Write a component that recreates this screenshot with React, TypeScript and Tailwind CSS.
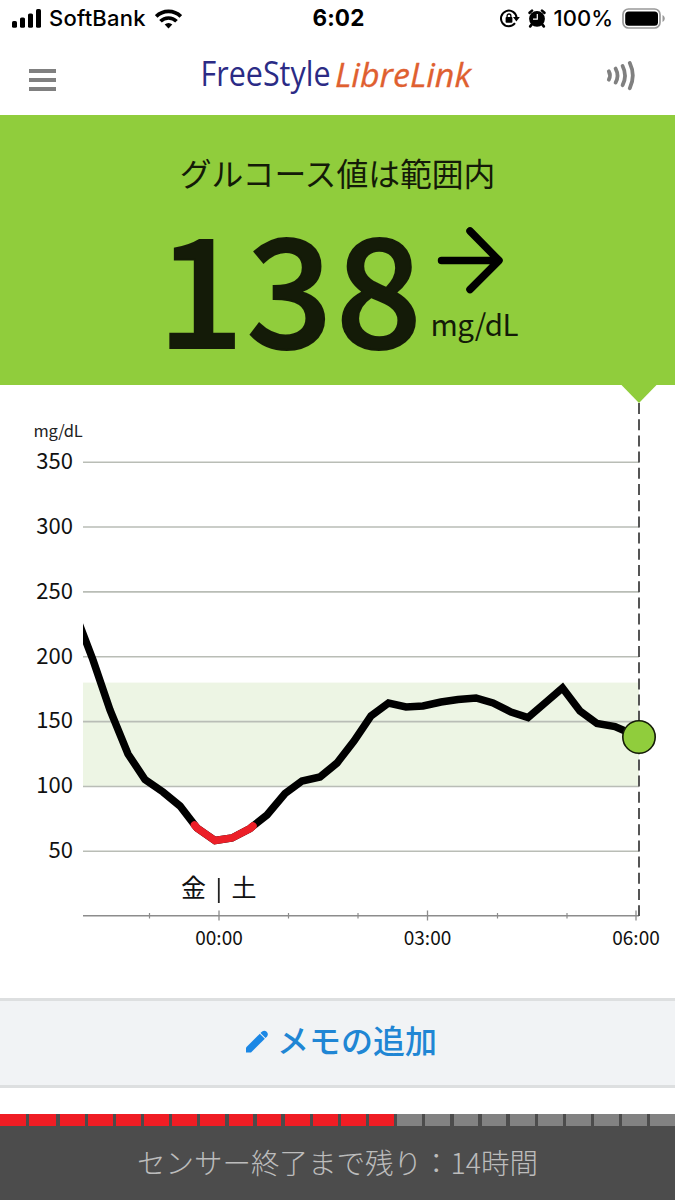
import React from 'react';

const GLUCOSE_LEVELS = [350, 300, 250, 200, 150, 100, 50];

const TRACE =
  '76,615.5 93,660 110,710 128,754 145,779.5 163,792 180,806 197,828 215,840.5 232,838 250,828.5 267,815 285,793.5 302,781 320,777 337,763 354,741 371,716 388.5,703 406,707 423,706 441,702 458,699.5 476,698 493,703 511,712 528,717.5 545,703 562.5,688 580,711 597,723.5 615,726.5 639,737';

const LOW_TRACE = '194.5,825 197,828 215,840.5 232,838 250,828.5 253,826';

const TIME_LABELS = [
  { x: 219, label: '00:00' },
  { x: 427.5, label: '03:00' },
  { x: 636, label: '06:00' },
];

const MINOR_TICKS = [149.5, 288.5, 358, 497.5, 567];

const SEGMENT_COUNT = 24;
const USED_SEGMENTS = 14;

function levelY(level: number) {
  return 462.2 + (350 - level) * 1.297;
}

function segmentWidth(index: number) {
  if (index === 0) return 'w-[26px]';
  if (index === 1) return 'w-[27px]';
  return 'flex-1';
}

function StatusBar() {
  return (
    <div className="grid h-[37px] grid-cols-3 items-center pl-3 pr-[10px] font-['Inter','Liberation_Sans',sans-serif] text-black">
      <div className="flex items-center">
        <svg width="30" height="19" viewBox="0 0 30 19">
          <rect x="0" y="12" width="5" height="6.8" rx="1.6" />
          <rect x="8" y="8.5" width="5" height="10.3" rx="1.6" />
          <rect x="16" y="4.5" width="5" height="14.3" rx="1.6" />
          <rect x="24" y="0" width="5" height="18.8" rx="1.6" />
        </svg>
        <span className="ml-[7px] pb-px text-[22px] font-medium leading-none tracking-[0.2px]">SoftBank</span>
        <svg className="ml-[9px]" width="27" height="20" viewBox="0 0 27 20" fill="none" stroke="black" strokeWidth="3.7">
          <path d="M1.2 7.4a17.4 17.4 0 0 1 24.6 0" />
          <path d="M5.5 12.3a11.3 11.3 0 0 1 16 0" />
          <path d="M13.5 19.4l-3.8-3.8a5.4 5.4 0 0 1 7.6 0z" fill="black" stroke="none" />
        </svg>
      </div>
      <div className="text-center text-[22.5px] font-bold leading-none tracking-[0.1px]">6:02</div>
      <div className="flex items-center justify-end">
        <svg width="20" height="19" viewBox="0 0 20 19">
          <path d="M15 14.2A7.8 7.8 0 1 1 16.6 9" fill="none" stroke="black" strokeWidth="2" />
          <path d="M13 8h6.8l-3.4 4.4z" />
          <rect x="5.6" y="8.1" width="6.8" height="5.6" rx="0.8" />
          <path d="M7.1 8.5V6.9a1.9 1.9 0 0 1 3.8 0v1.6" fill="none" stroke="black" strokeWidth="1.3" />
        </svg>
        <svg className="ml-2" width="18" height="19" viewBox="0 0 18 19">
          <circle cx="9" cy="9.8" r="7.9" />
          <path d="M1.6 3.8l2.4-2.2M16.4 3.8L14 1.6M3.6 15.6l-1.4 1.8M14.4 15.6l1.4 1.8" stroke="black" strokeWidth="2.6" strokeLinecap="round" />
          <path d="M9.3 5v5.2H5" fill="none" stroke="white" strokeWidth="1.2" />
        </svg>
        <span className="ml-[8px] pb-px text-[22px] font-medium leading-none">100%</span>
        <svg className="ml-[9px]" width="43" height="21" viewBox="0 0 43 21">
          <rect x="1" y="1" width="37" height="19" rx="5.5" fill="none" stroke="#999" strokeWidth="1.7" />
          <rect x="3.2" y="3.4" width="32.8" height="14.4" rx="3.5" />
          <path d="M40.5 7v7c3-1.4 3-5.6 0-7z" fill="#999" />
        </svg>
      </div>
    </div>
  );
}

function Header() {
  return (
    <header className="flex h-[78px] items-center pl-[29px] pr-[39px]">
      <button aria-label="Menu" className="flex flex-col gap-[5px] pt-[8px]">
        <span className="h-1 w-[27px] bg-[#808080]" />
        <span className="h-1 w-[27px] bg-[#808080]" />
        <span className="h-1 w-[27px] bg-[#808080]" />
      </button>
      <svg width="274" height="50" viewBox="200 50 274 50" className="ml-[144px] font-['Open_Sans','Noto_Sans',sans-serif]">
        <text x="200.5" y="84.5" fontSize="34" fill="#2b2b85" textLength="130" lengthAdjust="spacingAndGlyphs">
          FreeStyle
        </text>
        <text x="335" y="85.5" fontSize="33" fill="#df6030" stroke="#df6030" strokeWidth="0.3" fontStyle="italic" textLength="136" lengthAdjust="spacingAndGlyphs">
          LibreLink
        </text>
      </svg>
      <svg className="ml-auto" width="30" height="32" viewBox="606 59 30 32" fill="none" stroke="#808080" strokeWidth="3.8" strokeLinecap="round">
        <path d="M608.8 70.3q2.4 4.2 0 8.4" />
        <path d="M615.6 67.6q3.8 7 0 14" />
        <path d="M622.6 65q4.8 9.6 0 19.2" />
        <path d="M629.8 62q6 12.6 0 25.2" />
      </svg>
    </header>
  );
}

function GlucoseReading() {
  return (
    <section className="flex h-[270px] flex-col items-center bg-[#90cd3c] text-[#141b08]">
      <h1 className="mt-[34px] text-[31.8px] leading-[46px]">グルコース値は範囲内</h1>
      <div className="mt-[7px] flex w-[360px]">
        <span className="w-[265px] whitespace-nowrap text-[151px] font-medium leading-[160px] tracking-[3px] [-webkit-text-stroke:2px_#141b08]">138</span>
        <div className="ml-[8px] flex flex-col">
          <svg className="ml-[6px] mt-[24px]" width="66" height="68" viewBox="437 226 66 68" fill="none" stroke="black" strokeWidth="7.5" strokeLinecap="round" strokeLinejoin="round">
            <path d="M441.5 260.5H498M470 231l29 29.5-29 29" />
          </svg>
          <span className="mt-[7px] text-[29.5px] leading-[44px] tracking-[-0.6px]">mg/dL</span>
        </div>
      </div>
    </section>
  );
}

function GlucoseChart() {
  return (
    <svg className="block" width="675" height="613" viewBox="0 385 675 613">
      <defs>
        <clipPath id="plot">
          <rect x="83" y="403" width="592" height="513" />
        </clipPath>
      </defs>
      <rect x="83" y="682.6" width="556" height="104" fill="#edf5e4" />
      <text x="33.5" y="436.5" fontSize="16.5" letterSpacing="-0.35" fill="#222">mg/dL</text>
      {GLUCOSE_LEVELS.map((level) => (
        <g key={level}>
          <line x1="83" x2="639" y1={levelY(level)} y2={levelY(level)} stroke="#b9bdb6" strokeWidth="1.6" />
          <text x="73" y={levelY(level) + 6.8} fontSize="22" textAnchor="end" fill="#111">
            {level}
          </text>
        </g>
      ))}
      <line x1="83" x2="639" y1="915.8" y2="915.8" stroke="#8c8c8c" strokeWidth="1.6" />
      {MINOR_TICKS.map((x) => (
        <line key={x} x1={x} x2={x} y1="913" y2="918.5" stroke="#8c8c8c" strokeWidth="1.2" />
      ))}
      {TIME_LABELS.map(({ x, label }) => (
        <g key={label}>
          <line x1={x} x2={x} y1="910.5" y2="920.5" stroke="#8c8c8c" strokeWidth="1.3" />
          <text x={x} y="944.5" fontSize="19" textAnchor="middle" fill="#111">
            {label}
          </text>
        </g>
      ))}
      <g fontSize="25" fill="#111" textAnchor="middle">
        <text x="193.5" y="897">金</text>
        <text x="244" y="897">土</text>
      </g>
      <line x1="218.8" x2="218.8" y1="878" y2="903" stroke="#222" strokeWidth="1.8" />
      <line x1="639" x2="639" y1="403" y2="916" stroke="#555" strokeWidth="2" strokeDasharray="11 5.2" />
      <path d="M621 384.5h36l-18 18.5z" fill="#90cd3c" />
      <g clipPath="url(#plot)" fill="none" strokeWidth="7.5">
        <polyline points={TRACE} stroke="black" />
        <polyline points={LOW_TRACE} stroke="#ec1f28" strokeLinecap="round" />
      </g>
      <circle cx="639" cy="737" r="16.2" fill="#90cd3c" stroke="#141b08" strokeWidth="1.6" />
    </svg>
  );
}

function AddNoteButton() {
  return (
    <button className="flex h-[90px] w-full items-center justify-center gap-[8px] border-y-[3px] border-[#dddfe0] bg-[#f1f3f5] pl-[8px] text-[#2086d4]">
      <svg className="mb-[3px]" width="23" height="23" viewBox="0 0 23 23" fill="#1b87e5">
        <path d="M0 22.5v-5L13.8 3.7l5 5L5 22.5z" />
        <path d="M14.5 3l1.6-1.6a3.6 3.6 0 0 1 5 5L19.5 8z" />
      </svg>
      <span className="pb-[8px] text-[32px] font-medium leading-[46px]">メモの追加</span>
    </button>
  );
}

function SensorStatus() {
  return (
    <footer className="mt-[26px] h-[86px] bg-[#4c4c4c]">
      <div className="flex h-[12px] gap-[3.4px]">
        {Array.from({ length: SEGMENT_COUNT }, (_, i) => (
          <span key={i} className={`${segmentWidth(i)} ${i < USED_SEGMENTS ? 'bg-[#f01d24]' : 'bg-[#828282]'}`} />
        ))}
      </div>
      <p className="pt-[15px] text-center text-[28.5px] font-light leading-[42px] text-[#bcbcbc]">センサー終了まで残り：14時間</p>
    </footer>
  );
}

export default function App() {
  return (
    <div className="h-[1200px] w-[675px] overflow-hidden bg-white font-['Noto_Sans_CJK_JP',sans-serif]">
      <StatusBar />
      <Header />
      <GlucoseReading />
      <GlucoseChart />
      <AddNoteButton />
      <SensorStatus />
    </div>
  );
}
